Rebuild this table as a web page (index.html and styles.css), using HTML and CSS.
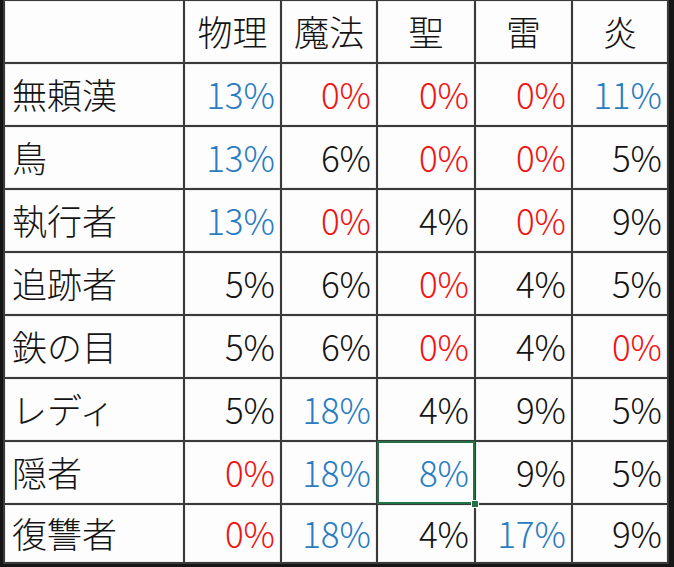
FILE: index.html
```html
<!DOCTYPE html>
<html lang="ja">
<head>
<meta charset="utf-8">
<link rel="stylesheet" href="styles.css">
</head>
<body>
<div class="sheet">
  <div class="c"></div><div class="c h">物理</div><div class="c h">魔法</div><div class="c h">聖</div><div class="c h">雷</div><div class="c h">炎</div>

  <div class="c n">無頼漢</div><div class="c v b">13%</div><div class="c v r">0%</div><div class="c v r">0%</div><div class="c v r">0%</div><div class="c v b">11%</div>

  <div class="c n">鳥</div><div class="c v b">13%</div><div class="c v">6%</div><div class="c v r">0%</div><div class="c v r">0%</div><div class="c v">5%</div>

  <div class="c n">執行者</div><div class="c v b">13%</div><div class="c v r">0%</div><div class="c v">4%</div><div class="c v r">0%</div><div class="c v">9%</div>

  <div class="c n">追跡者</div><div class="c v">5%</div><div class="c v">6%</div><div class="c v r">0%</div><div class="c v">4%</div><div class="c v">5%</div>

  <div class="c n">鉄の目</div><div class="c v">5%</div><div class="c v">6%</div><div class="c v r">0%</div><div class="c v">4%</div><div class="c v r">0%</div>

  <div class="c n">レディ</div><div class="c v">5%</div><div class="c v b">18%</div><div class="c v">4%</div><div class="c v">9%</div><div class="c v">5%</div>

  <div class="c n">隠者</div><div class="c v r">0%</div><div class="c v b">18%</div><div class="c v b sel">8%<span class="handle"></span></div><div class="c v">9%</div><div class="c v">5%</div>

  <div class="c n">復讐者</div><div class="c v r">0%</div><div class="c v b">18%</div><div class="c v">4%</div><div class="c v b">17%</div><div class="c v">9%</div>
</div>
</body>
</html>
```
FILE: styles.css
```css
html, body {
  margin: 0;
  padding: 0;
  background: #161616;
  width: 674px;
  height: 567px;
  overflow: hidden;
}

.sheet {
  margin-left: 3px;
  width: max-content;
  display: grid;
  grid-template-columns: 178px 95px 94px 96px 95px 94px;
  grid-template-rows: repeat(8, 61px) 57px;
  gap: 2px;
  padding: 1px 2px 2px 2px;
  background: #3a3a3a;
  font-family: "Noto Sans CJK JP", "Noto Sans", sans-serif;
  font-size: 35px;
  font-weight: 300;
  color: #141414;
}

.c {
  background: #fdfdfd;
  box-shadow: inset 0 0 0 1px #ededed;
  display: flex;
  align-items: center;
  line-height: 1;
  position: relative;
  padding-bottom: 2px;
}

.h {
  justify-content: center;
}

.n {
  padding-left: 7px;
}

.v {
  justify-content: flex-end;
  padding-right: 5px;
}

.b {
  color: #2a7cc2;
}

.r {
  color: #f01414;
}

.sel {
  box-shadow: inset 0 0 0 2px #217346;
  margin: -1px;
  padding-right: 6px;
  z-index: 2;
}

.handle {
  position: absolute;
  right: -4px;
  bottom: -4px;
  width: 6px;
  height: 6px;
  background: #217346;
  border: 1px solid #fff;
  z-index: 3;
}
```
